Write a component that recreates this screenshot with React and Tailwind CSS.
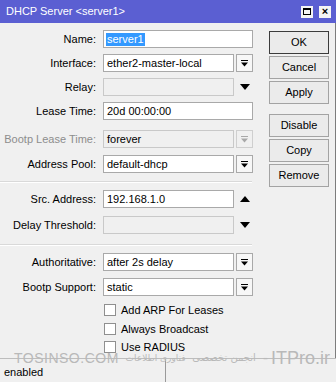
import React from "react";

const font = { fontFamily: "'Liberation Sans', Arial, sans-serif" };
const fa = { fontFamily: "'DejaVu Sans', sans-serif" };

function DropIcon({ grey }) {
  const c = grey ? "#a8a8a8" : "#000";
  return (
    <svg width="9" height="9" viewBox="0 0 9 9">
      <rect x="1" y="1" width="7" height="1" fill={c} />
      <polygon points="1,3.5 8,3.5 4.5,7.5" fill={c} />
    </svg>
  );
}

function Arrow({ up }) {
  return (
    <div className="w-[18px] h-[18px] flex items-center justify-center ml-[2px]">
      <svg width="10" height="6" viewBox="0 0 10 6">
        {up ? (
          <polygon points="0,6 10,6 5,0" fill="#000" />
        ) : (
          <polygon points="0,0 10,0 5,6" fill="#000" />
        )}
      </svg>
    </div>
  );
}

function Field({ label, value, kind = "plain", disabled, greyLabel, mt, selected }) {
  const inputBg = disabled ? "bg-[#f0f0f0] border-[#c9c9c9]" : "bg-white border-[#a9a9a9]";
  return (
    <div className="flex items-center h-[18px]" style={{ marginTop: mt }}>
      <div
        className={`w-[97px] text-right pr-[1px] text-[11px] leading-none ${
          greyLabel ? "text-[#8d8d8d]" : "text-black"
        }`}
      >
        {label}:
      </div>
      <div className="ml-[6px] flex items-center">
        <div
          className={`h-[18px] border ${inputBg} flex items-center pl-[2px] text-[11px] text-black leading-none ${
            kind === "plain" ? "w-[150px]" : "w-[131px]"
          }`}
        >
          {selected ? (
            <span className="bg-[#3399ff] text-white px-[1px] py-[1px]">{value}</span>
          ) : (
            <span className="pl-[1px]">{value}</span>
          )}
        </div>
        {kind === "drop" && (
          <div
            className={`ml-[2px] w-[17px] h-[18px] border flex items-center justify-center ${
              disabled ? "border-[#cfcfcf] bg-[#f0f0f0]" : "border-[#a9a9a9] bg-[#f7f7f7]"
            }`}
          >
            <DropIcon grey={disabled} />
          </div>
        )}
        {kind === "down" && <Arrow />}
        {kind === "up" && <Arrow up />}
      </div>
    </div>
  );
}

function Sep({ mt, mb }) {
  return (
    <div style={{ marginTop: mt, marginBottom: mb }} className="w-[252px]">
      <div className="h-px bg-[#d9d9d9]" />
      <div className="h-px bg-white" />
    </div>
  );
}

function Check({ label, mt }) {
  return (
    <div className="flex items-center h-[14px] pl-[104px]" style={{ marginTop: mt }}>
      <div className="w-[12px] h-[12px] border border-[#8f8f8f] bg-white" />
      <span className="ml-[5px] text-[11px] text-black leading-none">{label}</span>
    </div>
  );
}

function Btn({ children, primary, mt }) {
  return (
    <div
      style={{ marginTop: mt }}
      className={`w-[60px] h-[23px] flex items-center justify-center text-[11px] text-black bg-[#ebebeb] border ${
        primary ? "border-[#3c3c3c]" : "border-[#a3a3a3]"
      }`}
    >
      {children}
    </div>
  );
}

export default function App() {
  return (
    <div style={font} className="relative w-[336px] h-[382px] bg-[#f0f0f0] overflow-hidden select-none">
      {/* Title bar */}
      <div className="h-[23px] bg-[#5b5fd2] flex items-center justify-between pl-[6px] pr-[5px]">
        <span className="text-white text-[11px]">DHCP Server &lt;server1&gt;</span>
        <div className="flex items-center gap-[6px]">
          <div className="w-[12px] h-[12px] bg-[#f4f4f4] flex items-center justify-center">
            <div className="w-[8px] h-[7px] border border-black border-t-2" />
          </div>
          <div className="w-[12px] h-[12px] bg-[#f4f4f4] flex items-center justify-center text-[11px] font-bold leading-none text-black">
            ×
          </div>
        </div>
      </div>

      <div className="flex border-r border-[#7d7d7d] h-[335px]">
        {/* Form */}
        <div className="w-[266px] flex flex-col">
          <Field label="Name" value="server1" selected mt={7} />
          <Field label="Interface" value="ether2-master-local" kind="drop" mt={6} />
          <Field label="Relay" value="" kind="down" disabled mt={6} />
          <Field label="Lease Time" value="20d 00:00:00" mt={6} />
          <Field label="Bootp Lease Time" value="forever" kind="drop" disabled greyLabel mt={10} />
          <Field label="Address Pool" value="default-dhcp" kind="drop" mt={7} />
          <Sep mt={8} mb={7} />
          <Field label="Src. Address" value="192.168.1.0" kind="up" mt={0} />
          <Field label="Delay Threshold" value="" kind="down" disabled mt={8} />
          <Sep mt={10} mb={7} />
          <Field label="Authoritative" value="after 2s delay" kind="drop" mt={0} />
          <Field label="Bootp Support" value="static" kind="drop" mt={7} />
          <Check label="Add ARP For Leases" mt={7} />
          <Check label="Always Broadcast" mt={5} />
          <Check label="Use RADIUS" mt={4} />
        </div>

        {/* Buttons */}
        <div className="flex flex-col ml-[3px]">
          <Btn primary mt={8}>OK</Btn>
          <Btn mt={2}>Cancel</Btn>
          <Btn mt={2}>Apply</Btn>
          <Btn mt={10}>Disable</Btn>
          <Btn mt={2}>Copy</Btn>
          <Btn mt={2}>Remove</Btn>
        </div>
      </div>

      {/* Status bar */}
      <div className="absolute left-0 right-0 top-[358px] h-[24px] flex border-t border-[#bdbdbd]">
        <div className="w-[166px] h-full border-r border-[#9a9a9a] flex items-end pb-[4px] pl-[4px] text-[11px] leading-none text-black">
          enabled
        </div>
        <div className="flex-1" />
      </div>

      {/* Watermark */}
      <div className="absolute left-[14px] right-[6px] top-[351px] h-[14px] flex items-center justify-between whitespace-nowrap text-[#b9b9b9] leading-none">
        <span className="text-[14px] tracking-[0.5px]">TOSINSO.COM</span>
        <span dir="rtl" className="text-[9px]" style={fa}>
          فناوری اطلاعات
        </span>
        <span dir="rtl" className="text-[10px]" style={fa}>
          انجمن تخصصی
        </span>
        <span className="flex items-center gap-[3px]">
          <span className="text-[16px]">-</span>
          <span className="text-[18px]">ITPro.ir</span>
        </span>
      </div>
    </div>
  );
}
